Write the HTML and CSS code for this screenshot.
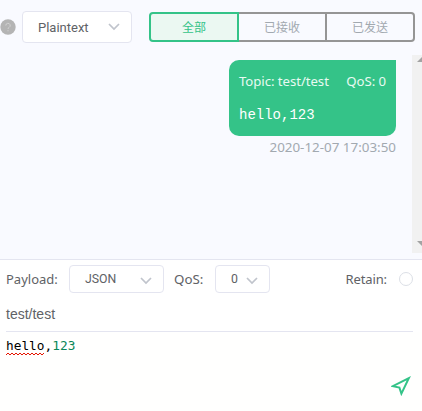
FILE: index.html
```
<!DOCTYPE html>
<html lang="zh">
<head>
    <meta charset="utf-8">
    <title>MQTT</title>
    <link rel="stylesheet" href="styles.css">
</head>

<body>

<div class="topbar">
    <svg class="help" viewBox="0 0 16 16">
        <circle cx="8" cy="8" r="7.7" fill="#b4b4b4"/>
        <path d="M5.8 6.5a2.2 2.2 0 1 1 3.3 1.9c-.8.5-1.1.8-1.1 1.6M8 11.2v1.1" fill="none" stroke="#d2d2d2"/>
    </svg>
    <div class="select format">
        <span>Plaintext</span>
        <svg class="arrow" viewBox="0 0 12 8"><path d="M1 1l5 5 5-5"/></svg>
    </div>
    <div class="tabs">
        <div class="tab active">全部</div>
        <div class="tab">已接收</div>
        <div class="tab">已发送</div>
    </div>
</div>

<div class="messages">
    <div class="list">
        <div class="bubble">
            <div class="meta"><span>Topic: test/test</span><span>QoS: 0</span></div>
            <div class="payload">hello,123</div>
        </div>
        <div class="time">2020-12-07 17:03:50</div>
    </div>
    <div class="scrollbar">
        <svg viewBox="0 0 10 6"><path d="M1 6l5-5 5 5z"/></svg>
        <svg viewBox="0 0 10 6"><path d="M1 0l5 5 5-5z"/></svg>
    </div>
</div>

<div class="footer">
    <div class="options">
        <span class="label payload-label">Payload:</span>
        <div class="select type">
            <span>JSON</span>
            <svg class="arrow" viewBox="0 0 12 8"><path d="M1 1l5 5 5-5"/></svg>
        </div>
        <span class="label qos-label">QoS:</span>
        <div class="select qos">
            <span>0</span>
            <svg class="arrow" viewBox="0 0 12 8"><path d="M1 1l5 5 5-5"/></svg>
        </div>
        <span class="label retain-label">Retain:</span>
        <span class="radio"></span>
    </div>
    <div class="topic">test/test</div>
    <div class="editor">
        <div class="code"><span class="misspelled">hello<svg class="squiggle" viewBox="0 0 38 4"><path d="M0 3l2-2 2 2 2-2 2 2 2-2 2 2 2-2 2 2 2-2 2 2 2-2 2 2 2-2 2 2 2-2 2 2 2-2 2 2 2-2"/></svg></span>,<span class="number">123</span></div>
        <svg class="send" viewBox="0 0 20 20"><path d="M17.8 2.2L1.8 10.2l6.6 1.4 2 6z"/></svg>
    </div>
</div>

</body>
</html>
```
FILE: styles.css
```
* {
    box-sizing: border-box;
}
body {
    margin: 0;
    width: 422px;
    height: 411px;
    overflow: hidden;
    display: flex;
    flex-direction: column;
    background: #f9faff;
    color: #606266;
    font-family: Roboto, "Noto Sans CJK SC", sans-serif;
    font-size: 13px;
}
svg {
    display: block;
}
.topbar {
    display: flex;
    height: 55px;
    padding-top: 11px;
}
.help {
    width: 16px;
    height: 16px;
    margin-top: 8px;
}
.select {
    display: flex;
    align-items: center;
    justify-content: space-between;
    background: #fff;
    border: 1px solid #e4e5f0;
    border-radius: 4px;
}
.arrow {
    width: 12px;
    height: 8px;
    fill: none;
    stroke: #c0c4cc;
    stroke-width: 1.7;
}
.format {
    width: 110px;
    height: 32px;
    margin-left: 6px;
    padding: 0 11px 0 15px;
}
.tabs {
    display: flex;
    width: 266px;
    height: 30px;
    margin: 1px 0 0 17px;
}
.tab {
    width: 88px;
    border: 2px solid #959595;
    border-left: 0;
    color: #a2a9b0;
    font-size: 12px;
    line-height: 28px;
    text-align: center;
}
.tab.active {
    width: 90px;
    border: 2px solid #34c388;
    border-radius: 4px 0 0 4px;
    background: #ebf8f2;
    color: #34c388;
}
.tab:last-child {
    border-radius: 0 4px 4px 0;
}
.messages {
    display: flex;
    height: 204px;
}
.list {
    flex: 1;
    display: flex;
    flex-direction: column;
    align-items: flex-end;
    padding: 5px 16px 0 0;
    font-family: "Noto Sans", sans-serif;
}
.bubble {
    width: 167px;
    height: 76px;
    padding: 11px 10px 0;
    border-radius: 10px 0 10px 10px;
    background: #34c388;
    color: #e8faf2;
}
.meta {
    display: flex;
    justify-content: space-between;
    font-size: 13.2px;
    line-height: 20px;
    letter-spacing: -0.05px;
    white-space: nowrap;
}
.payload {
    margin-top: 14px;
    font: 14px/20px "Liberation Mono", monospace;
    color: #fff;
}
.time {
    font-size: 13.4px;
    line-height: 22px;
    color: #a2a9b0;
    white-space: nowrap;
}
.scrollbar {
    width: 10px;
    height: 198px;
    display: flex;
    flex-direction: column;
    justify-content: space-between;
    padding: 1px 0 6px 4px;
    background: #f1f1f1;
    overflow: hidden;
}
.scrollbar svg {
    width: 10px;
    height: 6px;
    fill: #a3a3a3;
}
.footer {
    flex: 1;
    display: flex;
    flex-direction: column;
    padding: 0 9px 0 6px;
    border-top: 1px solid #e4e5f0;
    background: #fff;
}
.options {
    display: flex;
    align-items: center;
    height: 38px;
}
.options .arrow {
    margin-top: 3px;
}
.label {
    font-family: "Noto Sans", sans-serif;
    white-space: nowrap;
}
.payload-label {
    width: 63px;
}
.qos-label {
    width: 41px;
    margin-left: 10px;
    font-size: 13.3px;
}
.type {
    width: 95px;
    height: 28px;
    padding: 0 11px 0 15px;
    font-size: 12.3px;
}
.qos {
    width: 55px;
    height: 28px;
    padding: 0 11px 0 15px;
    font-size: 12.3px;
}
.retain-label {
    margin-left: auto;
    letter-spacing: -0.1px;
}
.radio {
    width: 14px;
    height: 14px;
    margin-left: 12px;
    border: 1px solid #dcdfe6;
    border-radius: 50%;
}
.topic {
    height: 34px;
    border-bottom: 1px solid #e4e5f0;
    font: 14px/32px "Liberation Sans", sans-serif;
}
.editor {
    flex: 1;
    display: flex;
    flex-direction: column;
    justify-content: space-between;
    padding: 4px 0 15px 6px;
    margin: 0 -9px 0 -6px;
    background: #fffffe;
}
.code {
    font: 12.8px/19px "DejaVu Sans Mono", monospace;
    color: #000;
}
.misspelled {
    position: relative;
}
.squiggle {
    position: absolute;
    left: 0;
    bottom: -3px;
    width: 38px;
    height: 4px;
    fill: none;
    stroke: #e51400;
}
.number {
    color: #098658;
}
.send {
    align-self: flex-end;
    width: 20px;
    height: 20px;
    margin-right: 11px;
    fill: none;
    stroke: #34c388;
    stroke-width: 2;
}
```
